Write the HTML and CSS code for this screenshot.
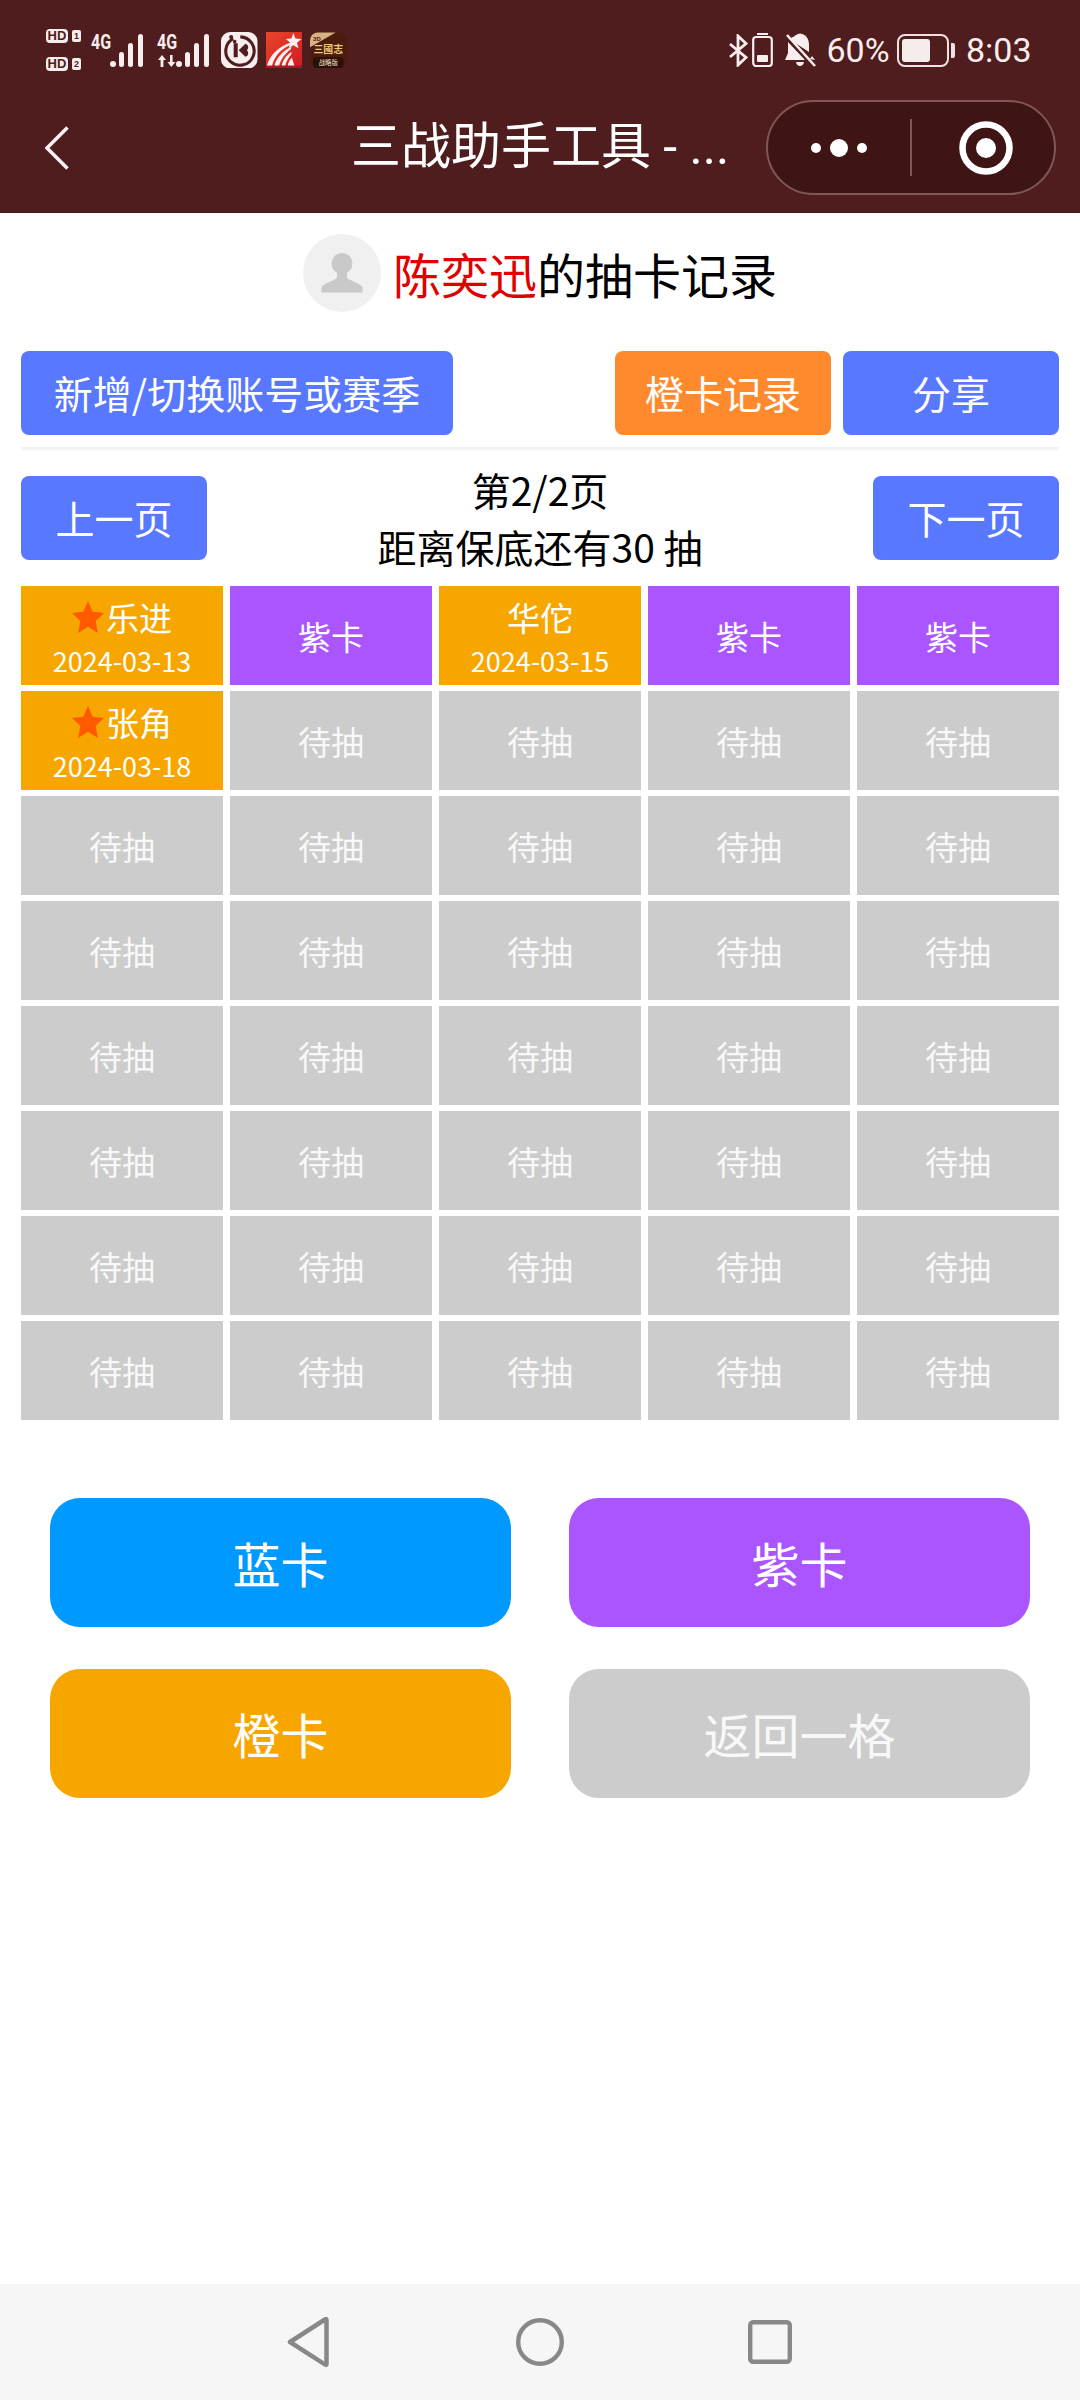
FILE: index.html
```html
<!DOCTYPE html>
<html lang="zh-CN">
<head>
<meta charset="utf-8">
<title>三战助手工具</title>
<link rel="stylesheet" href="styles.css">
</head>
<body>
<div class="app">
  <header class="top">
    <div class="status">
      <div class="status-left">
        <div class="hd-stack">
          <div class="hd-line"><span class="hd">HD</span><span class="sim">1</span></div>
          <div class="hd-line"><span class="hd">HD</span><span class="sim">2</span></div>
        </div>
        <div class="net net-one">
          <span class="net-label">4G</span>
          <svg class="bars" viewBox="0 0 35 33"><circle cx="3" cy="30" r="3"/><rect x="9" y="18" width="5" height="15" rx="2.5"/><rect x="18" y="9" width="5" height="24" rx="2.5"/><rect x="28" y="0" width="5" height="33" rx="2.5"/></svg>
        </div>
        <div class="net net-two">
          <div class="net-col">
            <span class="net-label">4G</span>
            <svg class="updown" viewBox="0 0 19 12"><path d="M5 0 L9 5 H6.400 V12 H3.600 V5 H1 Z M13 0 H15.600 V7 H18.500 L14.300 12 L10.500 7 H13 Z"/></svg>
          </div>
          <svg class="bars" viewBox="0 0 35 33"><circle cx="3" cy="30" r="3"/><rect x="9" y="18" width="5" height="15" rx="2.5"/><rect x="18" y="9" width="5" height="24" rx="2.5"/><rect x="28" y="0" width="5" height="33" rx="2.5"/></svg>
        </div>
        <svg class="app-icon" viewBox="0 0 36 36">
          <rect width="36" height="36" rx="9" fill="#f8eeee"/>
          <path d="M12 6.500 A14 14 0 1 0 19 4.800" fill="none" stroke="#4f1d1d" stroke-width="3"/>
          <circle cx="10" cy="5" r="2" fill="#4f1d1d"/>
          <circle cx="13.500" cy="9.500" r="1.800" fill="#4f1d1d"/>
          <path d="M12.500 11 H16.500 V25 H12.500 Z M17.500 18 L24 11.500 C27.500 12.500 27.500 16 25.500 18 C27.500 20 27.500 23.500 24 24.500 Z" fill="#4f1d1d"/>
        </svg>
        <svg class="app-icon app-gap" viewBox="0 0 36 36">
          <defs><linearGradient id="redfade" x1="0" y1="0" x2="1" y2="1"><stop offset="0" stop-color="#e9452b"/><stop offset="1" stop-color="#d01a22"/></linearGradient></defs>
          <rect width="36" height="36" fill="url(#redfade)"/>
          <rect y="33" width="36" height="3" fill="#b80f2b"/>
          <path d="M1 33 C4 22 13 14 25 10 L23.500 13 C14 17 8 25 6 33 Z M8.500 33 C10 26 16 19 25 14.500 L24.500 17 C19 21 14.500 27 13 33 Z M15.500 33 C16.500 28 20 23 25 19.500 L25 22 C22 25.500 20 29 19 33 Z M21.500 33 C22 30 23.500 27.500 25.500 25.500 L28 33 Z" fill="#fbf0ee"/>
          <path d="M27 1 L29 6.500 L35 7 L30.500 10.500 L32 16 L27 13 L22.500 16 L24 10.500 L19.500 7 L25 6.500 Z" fill="#fbf0ee"/>
        </svg>
        <svg class="app-icon app-gap" viewBox="0 0 37 36">
          <rect width="37" height="36" rx="8" fill="#4a1c0e"/>
          <path d="M8 0 H26 L0 15 V8 A8 8 0 0 1 8 0 Z" fill="#d9b184"/>
          <rect x="3" y="25" width="31" height="11" rx="4" fill="#2b0f08"/>
          <text class="app-tag" x="7" y="9">3D</text>
          <text class="app-gold" x="18.500" y="21">三國志</text>
          <text class="app-sub" x="18.500" y="33">战略版</text>
        </svg>
      </div>
      <div class="status-right">
        <svg class="bt" viewBox="0 0 20 33"><path d="M2 10 L18 23.500 L10 31 V2 L18 9.500 L2 23" fill="none" stroke="#f8eeee" stroke-width="2.800"/></svg>
        <svg class="phone" viewBox="0 0 21 34"><rect x="5" y="0" width="11" height="2" fill="#f8eeee"/><rect x="1.200" y="4" width="18.600" height="29" rx="3" fill="none" stroke="#f8eeee" stroke-width="2.200"/><rect x="5" y="22" width="11" height="7" rx="1" fill="#f8eeee"/></svg>
        <svg class="bell" viewBox="0 0 31 34"><path d="M4 6 L9 3.500 C10.500 2 12 1 15 0.500 C21 1 24 6 24 12 V19 Z M3 9 V20 L0 27 H20 Z M11 29 H19 C18.500 31.500 17 33 15 33 C13 33 11.500 31.500 11 29 Z M25 26 L30 27 L27 23 Z" fill="#f8eeee"/><path d="M2 2 L30 33" stroke="#f8eeee" stroke-width="2.600"/></svg>
        <span class="status-text pct">60%</span>
        <span class="battery"><span class="battery-fill"></span></span>
        <span class="battery-nub"></span>
        <span class="status-text time">8:03</span>
      </div>
    </div>
    <div class="nav">
      <svg class="back" viewBox="0 0 24 44"><path d="M22.500 1.500 L2 22 L22.500 42.500" fill="none" stroke="#f8f1f1" stroke-width="3.600"/></svg>
      <div class="title">三战助手工具 - ...</div>
      <div class="capsule">
        <div class="dots"><i class="dot"></i><i class="dot dot-big"></i><i class="dot"></i></div>
        <i class="capsule-line"></i>
        <svg class="target" viewBox="0 0 54 54"><circle cx="27" cy="27" r="23.500" fill="none" stroke="#fff" stroke-width="6.500"/><circle cx="27" cy="27" r="10" fill="#fff"/></svg>
      </div>
    </div>
  </header>

  <main class="page">
    <div class="owner">
      <svg class="avatar" viewBox="0 0 78 78"><circle cx="39" cy="39" r="39" fill="#f0f0f0"/><circle cx="39" cy="29.500" r="10.500" fill="#c9c9c9"/><path d="M18.500 58.500 V54 C18.500 50 30 47 34 44 V36 H44 V44 C48 47 59.500 50 59.500 54 V58.500 Z" fill="#c9c9c9"/></svg>
      <div class="owner-text"><span class="owner-name">陈奕迅</span>的抽卡记录</div>
    </div>

    <div class="actions">
      <div class="btn btn-blue btn-wide">新增/切换账号或赛季</div>
      <div class="action-group">
        <div class="btn btn-orange btn-mid">橙卡记录</div>
        <div class="btn btn-blue btn-mid">分享</div>
      </div>
    </div>
    <div class="divider"></div>

    <div class="pager">
      <div class="btn btn-blue btn-page">上一页</div>
      <div class="pager-info">
        <div>第2/2页</div>
        <div>距离保底还有30 抽</div>
      </div>
      <div class="btn btn-blue btn-page">下一页</div>
    </div>

    <div class="grid">
      <div class="cell cell-orange"><div class="cell-name"><svg class="star" viewBox="0 0 32 32"><path d="M16 0 L20.800 10.800 L32 12 L23.600 20 L26 32 L16 25.800 L6 32 L8.400 20 L0 12 L11.200 10.800 Z"/></svg>乐进</div><div class="cell-date">2024-03-13</div></div>
      <div class="cell cell-purple">紫卡</div>
      <div class="cell cell-orange"><div class="cell-name">华佗</div><div class="cell-date">2024-03-15</div></div>
      <div class="cell cell-purple">紫卡</div>
      <div class="cell cell-purple">紫卡</div>
      <div class="cell cell-orange"><div class="cell-name"><svg class="star" viewBox="0 0 32 32"><path d="M16 0 L20.800 10.800 L32 12 L23.600 20 L26 32 L16 25.800 L6 32 L8.400 20 L0 12 L11.200 10.800 Z"/></svg>张角</div><div class="cell-date">2024-03-18</div></div>
      <div class="cell cell-gray">待抽</div><div class="cell cell-gray">待抽</div><div class="cell cell-gray">待抽</div><div class="cell cell-gray">待抽</div>
      <div class="cell cell-gray">待抽</div><div class="cell cell-gray">待抽</div><div class="cell cell-gray">待抽</div><div class="cell cell-gray">待抽</div><div class="cell cell-gray">待抽</div>
      <div class="cell cell-gray">待抽</div><div class="cell cell-gray">待抽</div><div class="cell cell-gray">待抽</div><div class="cell cell-gray">待抽</div><div class="cell cell-gray">待抽</div>
      <div class="cell cell-gray">待抽</div><div class="cell cell-gray">待抽</div><div class="cell cell-gray">待抽</div><div class="cell cell-gray">待抽</div><div class="cell cell-gray">待抽</div>
      <div class="cell cell-gray">待抽</div><div class="cell cell-gray">待抽</div><div class="cell cell-gray">待抽</div><div class="cell cell-gray">待抽</div><div class="cell cell-gray">待抽</div>
      <div class="cell cell-gray">待抽</div><div class="cell cell-gray">待抽</div><div class="cell cell-gray">待抽</div><div class="cell cell-gray">待抽</div><div class="cell cell-gray">待抽</div>
      <div class="cell cell-gray">待抽</div><div class="cell cell-gray">待抽</div><div class="cell cell-gray">待抽</div><div class="cell cell-gray">待抽</div><div class="cell cell-gray">待抽</div>
    </div>

    <div class="pick">
      <div class="pick-btn pick-blue">蓝卡</div>
      <div class="pick-btn pick-purple">紫卡</div>
      <div class="pick-btn pick-orange">橙卡</div>
      <div class="pick-btn pick-gray">返回一格</div>
    </div>
  </main>

  <footer class="sysnav">
    <svg class="sys-back" viewBox="0 0 42 50"><path d="M39.500 3 V47 Q39.500 48.500 38 47.500 L3 25 L38 2.500 Q39.500 1.500 39.500 3 Z" fill="none" stroke="#888" stroke-width="4.500" stroke-linejoin="round"/></svg>
    <svg class="sys-home" viewBox="0 0 48 48"><circle cx="24" cy="24" r="21.800" fill="none" stroke="#888" stroke-width="4.400"/></svg>
    <svg class="sys-recent" viewBox="0 0 44 44"><rect x="2.200" y="2.200" width="39.600" height="39.600" rx="3" fill="none" stroke="#888" stroke-width="4.400"/></svg>
  </footer>
</div>
</body>
</html>
```

FILE: styles.css
```css
* { box-sizing: border-box; }
html, body { margin: 0; padding: 0; background: #fff; }
body { font-family: "Noto Sans CJK SC", "Noto Sans", sans-serif; color: #000; }
.app { width: 1080px; height: 2400px; display: flex; flex-direction: column; overflow: hidden; }

/* top bars */
.top { height: 213px; background: #4f1d1d; color: #f8eeee; flex: none; }
.status { height: 100px; padding: 0 49px 0 46px; display: flex; align-items: center; justify-content: space-between; }
.status-left, .status-right { display: flex; align-items: center; }
.hd-stack { width: 37px; height: 42px; display: flex; flex-direction: column; justify-content: space-between; }
.hd-line { display: flex; align-items: center; gap: 4px; height: 14px; }
.hd { width: 22px; height: 14px; border-radius: 4px; background: #f8eeee; color: #4f1d1d; font: 700 13px/14px "Liberation Sans", sans-serif; text-align: center; }
.sim { width: 9px; height: 12px; border-radius: 2px; background: #f8eeee; color: #4f1d1d; font: 700 9px/12px "Liberation Sans", sans-serif; text-align: center; }
.net { display: flex; height: 33px; align-items: flex-start; }
.net-one { margin-left: 8px; }
.net-two { margin-left: 12px; }
.net-col { display: flex; flex-direction: column; justify-content: space-between; height: 33px; width: 19px; }
.net-label { display: block; width: 19px; font: 700 20px/16px "Roboto", sans-serif; transform: scaleX(0.8); transform-origin: left top; white-space: nowrap; }
.updown { width: 19px; height: 12px; fill: #f8eeee; }
.bars { width: 35px; height: 33px; fill: #f8eeee; }
.app-icon { width: 36.500px; height: 36.500px; margin-left: 10px; }
.app-gap { margin-left: 8px; }
.app-tag { font: 700 6px "Liberation Sans", sans-serif; fill: #4a1a0a; text-anchor: middle; }
.app-gold { font: 700 10px "Noto Sans CJK SC", sans-serif; fill: #f0c878; text-anchor: middle; }
.app-sub { font: 400 6.500px "Noto Sans CJK SC", sans-serif; fill: #f3e2c8; text-anchor: middle; }
.bt { width: 20px; height: 33px; }
.phone { width: 21px; height: 34px; margin-left: 4px; }
.bell { width: 31px; height: 34px; margin-left: 12px; }
.status-text { font: 400 34px/40px "Roboto", sans-serif; color: #f8eeee; }
.pct { margin-left: 11px; width: 62px; white-space: nowrap; }
.battery { width: 52px; height: 33px; margin-left: 8px; border: 2.500px solid #f0e2e2; border-radius: 8px; padding: 3px; display: flex; }
.battery-fill { width: 28px; background: #f5ecec; border-radius: 3px; }
.battery-nub { width: 4px; height: 15px; margin-left: 2.500px; background: #f0e2e2; border-radius: 0 2px 2px 0; }
.time { margin-left: 11px; width: 65px; white-space: nowrap; }
.nav { height: 95px; display: grid; grid-template-columns: 1fr auto 1fr; align-items: center; padding: 0 24px; }
.back { width: 24px; height: 44px; margin-left: 21px; }
.title { font-family: "Roboto", "Noto Sans CJK SC", sans-serif; font-size: 50px; line-height: 70px; color: #fff; white-space: nowrap; padding-bottom: 1px; }
.capsule { justify-self: end; width: 290px; height: 95px; border: 2px solid #7f5757; border-radius: 48px; background: #3f1414; display: flex; align-items: center; }
.dots { width: 142px; display: flex; align-items: center; justify-content: center; gap: 9px; }
.dot { width: 10px; height: 10px; border-radius: 50%; background: #fff; }
.dot-big { width: 18px; height: 18px; }
.capsule-line { width: 2px; height: 57px; background: #7f5757; }
.target { width: 54px; height: 54px; margin-left: 47px; }

/* page */
.page { flex: 1; padding: 21px 21px 0; }
.owner { display: flex; align-items: center; justify-content: center; gap: 12px; height: 78px; }
.avatar { width: 78px; height: 78px; }
.owner-text { font-size: 48px; line-height: 78px; white-space: nowrap; }
.owner-name { color: #e00000; }
.actions { display: flex; justify-content: space-between; margin-top: 39px; }
.action-group { display: flex; gap: 12px; }
.btn { height: 84px; border-radius: 8px; color: #fff; font-size: 39px; line-height: 82px; text-align: center; white-space: nowrap; }
.btn-blue { background: #5778ff; }
.btn-orange { background: #ff8a2e; }
.btn-wide { width: 432px; }
.btn-mid { width: 216px; }
.btn-page { width: 186px; flex: none; }
.divider { height: 3px; margin-top: 12px; background: #f3f3f3; }
.pager { display: flex; align-items: center; justify-content: space-between; margin-top: 11px; }
.pager-info { font-size: 39px; line-height: 57px; text-align: center; }
.grid { display: grid; grid-template-columns: repeat(5, 1fr); grid-auto-rows: 99px; column-gap: 7px; row-gap: 6px; margin-top: 11px; }
.cell { display: flex; flex-direction: column; align-items: center; justify-content: center; color: #fff; font-size: 33px; line-height: 40px; white-space: nowrap; }
.cell-orange { background: #f7a600; padding-top: 6px; }
.cell-purple { background: #aa55ff; }
.cell-gray { background: #cccccc; color: #f8f8f8; }
.cell-name { display: flex; align-items: center; height: 43px; }
.cell-date { font-size: 27px; line-height: 43px; height: 43px; }
.star { width: 32px; height: 32px; margin-right: 2px; fill: #ff5a00; }
.pick { display: grid; grid-template-columns: 461px 461px; grid-auto-rows: 129px; justify-content: space-between; row-gap: 42px; margin: 78px 29px 0; }
.pick-btn { border-radius: 30px; color: #fff; font-size: 48px; line-height: 129px; text-align: center; }
.pick-blue { background: #0099ff; }
.pick-purple { background: #aa55ff; }
.pick-orange { background: #f7a600; }
.pick-gray { background: #cccccc; color: #f8f8f8; }

/* system nav */
.sysnav { height: 116px; flex: none; background: #f6f6f6; display: flex; align-items: center; padding-left: 287px; }
.sys-back { width: 42px; height: 50px; }
.sys-home { width: 48px; height: 48px; margin-left: 187px; }
.sys-recent { width: 44px; height: 44px; margin-left: 184px; }
```
